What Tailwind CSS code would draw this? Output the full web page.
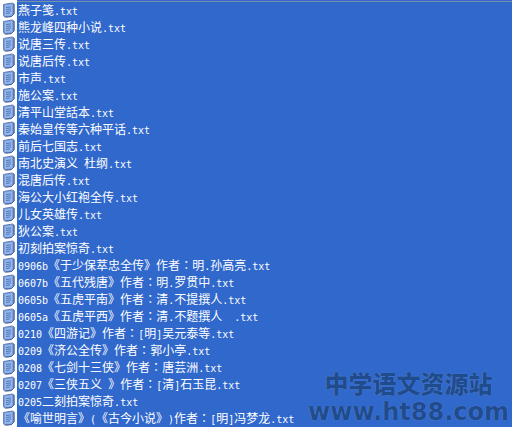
<!DOCTYPE html>
<html lang="zh-CN">
  <head>
    <meta charset="UTF-8" />
    <meta name="viewport" content="width=device-width, initial-scale=1.0" />
    <title>中学语文资源站</title>
    <script src="https://cdn.jsdelivr.net/npm/@tailwindcss/browser@4"></script>
  </head>
  <body class="bg-white">
    <svg class="hidden" xmlns="http://www.w3.org/2000/svg">
      <symbol id="txt-icon" viewBox="0 0 13 16">
        <path d="M1.5 2.5 10.5 1l1.5 1v10L9.500 14.500 2.500 15 1.500 13z" fill="#7b9fdc" stroke="#6480b8" />
        <path d="M3 3.500 10 2.500v9.500l-2 1.500-5 .3z" fill="#94b8ee" />
        <path d="M12 2v10l-2.500 2.500-6 .6" fill="none" stroke="#4a6296" />
        <path d="M4 5.500l5-.6M4 7.500l5-.6M4 9.500l5-.6M4 11.500l4-.5" stroke="#5577b8" />
      </symbol>
    </svg>
    <main class="relative">
      <div class="ml-[17px] h-[2px] border-b border-[#6c98a0] bg-[#3f60d8]"></div>
      <ul id="file-list" class="text-[12px] leading-[15px] text-white font-['Noto_Sans_CJK_SC',sans-serif]"></ul>
      <div class="pointer-events-none absolute right-[3px] bottom-0 text-center font-black text-[#204c8e] [text-shadow:0_0_1px_#6c9ae0]">
        <p class="text-[24px] leading-[28px] font-['Noto_Sans_CJK_SC',sans-serif]">中学语文资源站</p>
        <p class="text-[24px] leading-[30px] font-['DejaVu_Sans',sans-serif]">www.ht88.com</p>
      </div>
    </main>
    <script>
      const files = [
        '燕子笺.txt',
        '熊龙峰四种小说.txt',
        '说唐三传.txt',
        '说唐后传.txt',
        '市声.txt',
        '施公案.txt',
        '清平山堂話本.txt',
        '秦始皇传等六种平话.txt',
        '前后七国志.txt',
        '南北史演义 杜纲.txt',
        '混唐后传.txt',
        '海公大小红袍全传.txt',
        '儿女英雄传.txt',
        '狄公案.txt',
        '初刻拍案惊奇.txt',
        '0906b《于少保萃忠全传》作者：明.孙高亮.txt',
        '0607b《五代残唐》作者：明.罗贯中.txt',
        '0605b《五虎平南》作者：清.不提撰人.txt',
        '0605a《五虎平西》作者：清.不题撰人  .txt',
        '0210《四游记》作者：[明]吴元泰等.txt',
        '0209《济公全传》作者：郭小亭.txt',
        '0208《七剑十三侠》作者：唐芸洲.txt',
        '0207《三侠五义 》作者：[清]石玉昆.txt',
        '0205二刻拍案惊奇.txt',
        '《喻世明言》(《古今小说》)作者：[明]冯梦龙.txt',
      ];

      // latin runs use a half-width mono face, the colon a centred one
      const format = (name) =>
        name
          .replace(/[\x20-\x7e]+/g, (run) => `<span class="text-[10px] font-['DejaVu_Sans_Mono',monospace]">${run}</span>`)
          .replace(/：/g, `<span lang="zh-TW" class="font-['Noto_Sans_CJK_TC',sans-serif]">：</span>`);

      document.getElementById('file-list').innerHTML = files
        .map(
          (name) => `
            <li class="flex h-[17px]">
              <svg class="mx-[2px] h-[16px] w-[13px] shrink-0" aria-hidden="true"><use href="#txt-icon" /></svg>
              <span class="grow whitespace-pre bg-[#3068cc] pl-px [text-spacing-trim:space-all]">${format(name)}</span>
            </li>`
        )
        .join('');
    </script>
  </body>
</html>
